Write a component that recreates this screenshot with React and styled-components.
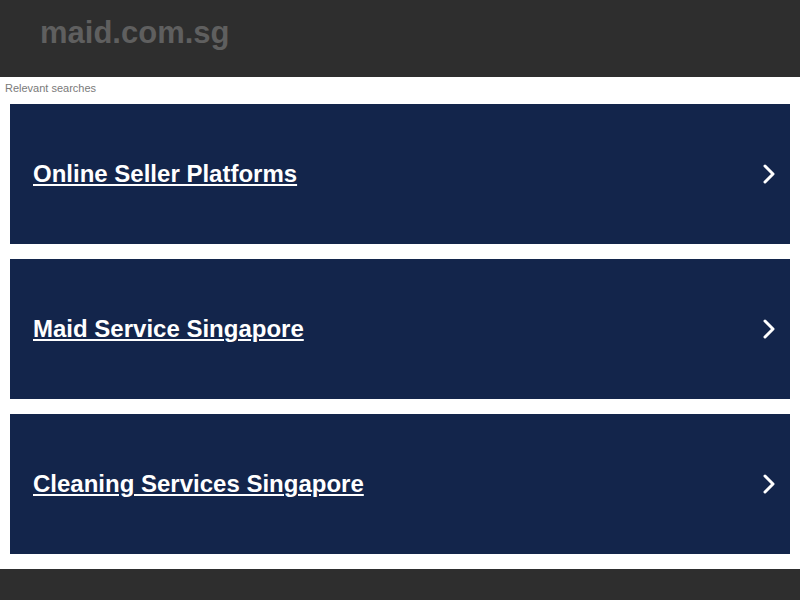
import React from "react";
import styled, { createGlobalStyle } from "styled-components";

const Global = createGlobalStyle`
  html, body { margin: 0; padding: 0; background: #ffffff; }
  body { font-family: "Liberation Sans", Arial, sans-serif; }
`;

const Header = styled.header`
  height: 77px;
  background: #2e2e2e;
  display: flex;
  align-items: flex-start;
  padding-left: 40px;
  box-sizing: border-box;
`;

const Title = styled.h1`
  margin: 0;
  padding-top: 14px;
  font-size: 31px;
  line-height: 38px;
  font-weight: bold;
  color: #5f5f5f;
`;

const Label = styled.div`
  font-size: 11px;
  line-height: 13px;
  color: #7a7a7a;
  padding: 5px 5px 9px 5px;
`;

const List = styled.div`
  display: flex;
  flex-direction: column;
  gap: 15px;
  padding: 0 10px 15px;
`;

const Card = styled.a`
  height: 140px;
  background: #13254b;
  display: flex;
  align-items: center;
  justify-content: space-between;
  padding: 0 14px 0 23px;
  box-sizing: border-box;
  text-decoration: none;
`;

const CardText = styled.span`
  color: #ffffff;
  font-size: 24px;
  font-weight: bold;
  text-decoration: underline;
  text-underline-offset: 2px;
  text-decoration-thickness: 2px;
`;

const Footer = styled.footer`
  height: 31px;
  background: #2e2e2e;
`;

const Chevron = () => (
  <svg width="14" height="20" viewBox="0 0 14 20" aria-hidden="true">
    <path d="M3 2 L11 10 L3 18" fill="none" stroke="#ffffff" strokeWidth="3" strokeLinecap="round" strokeLinejoin="round" />
  </svg>
);

const items = ["Online Seller Platforms", "Maid Service Singapore", "Cleaning Services Singapore"];

export default function App() {
  return (
    <>
      <Global />
      <Header>
        <Title>maid.com.sg</Title>
      </Header>
      <Label>Relevant searches</Label>
      <List>
        {items.map((t) => (
          <Card key={t} href="#">
            <CardText>{t}</CardText>
            <Chevron />
          </Card>
        ))}
      </List>
      <Footer />
    </>
  );
}
